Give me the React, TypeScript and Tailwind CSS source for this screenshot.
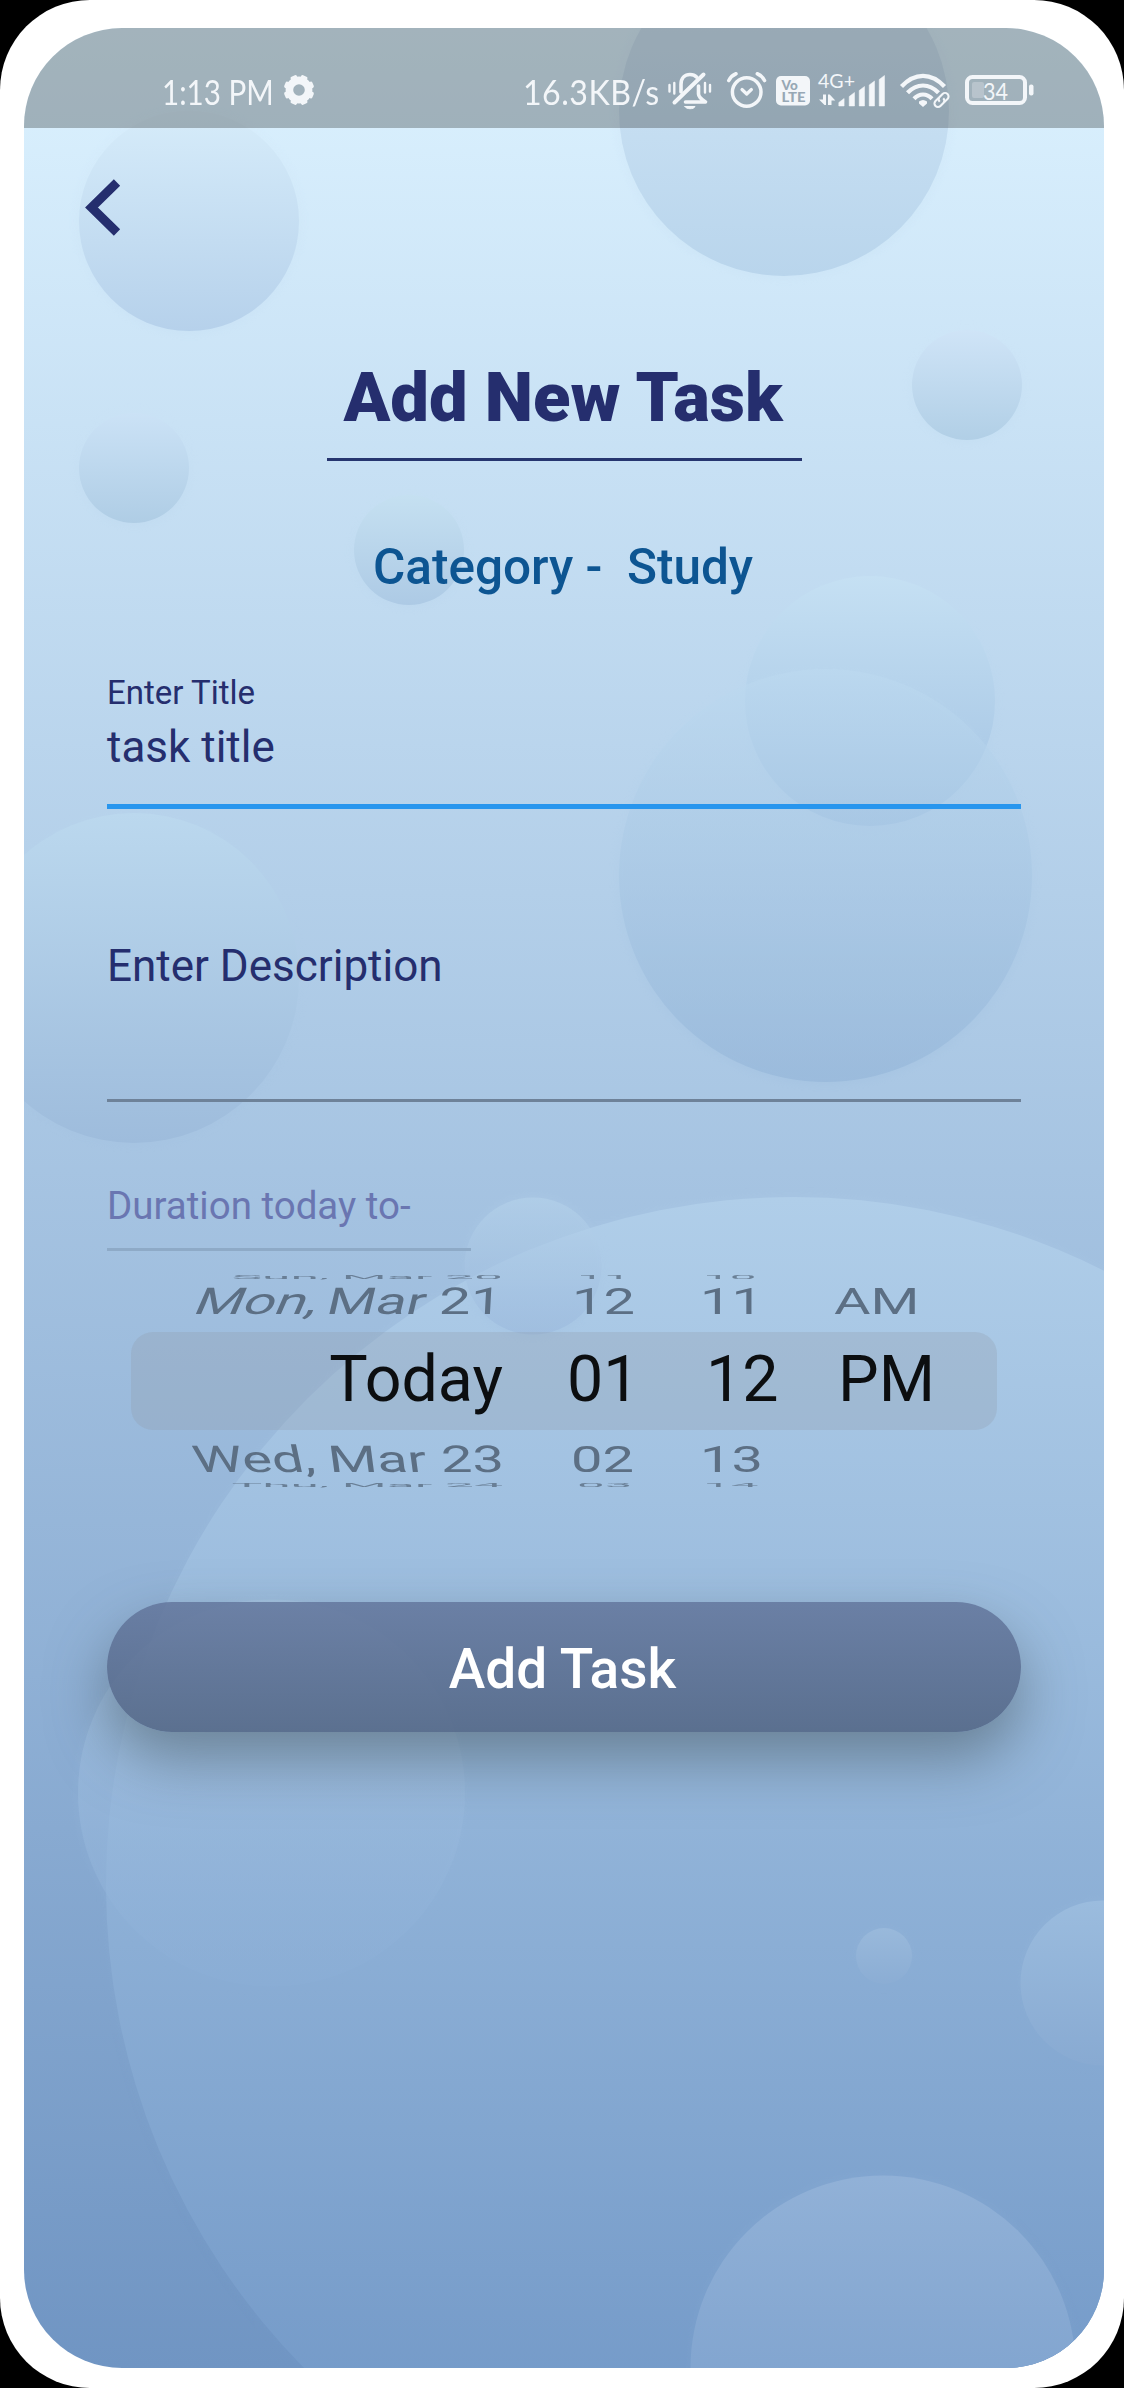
import React from "react";

type Bubble = { cx: number; cy: number; r: number; top: string; bottom: string; o?: number };

const bubbles: Bubble[] = [
  { cx: 189, cy: 221, r: 110, top: "#d6ecfa", bottom: "#b6d1eb" },
  { cx: 784, cy: 111, r: 165, top: "#d3e8f8", bottom: "#b9d5ec" },
  { cx: 967, cy: 385, r: 55, top: "#cfe4f7", bottom: "#b1cfe6" },
  { cx: 134, cy: 468, r: 55, top: "#cbe2f6", bottom: "#afcde5" },
  { cx: 409, cy: 550, r: 55, top: "#c5e0f1", bottom: "#adcae5" },
  { cx: 870, cy: 701, r: 125, top: "#c5e0f3", bottom: "#a2c2e2" },
  { cx: 825.5, cy: 875.5, r: 206.5, top: "#bddaf0", bottom: "#91b3d7", o: 0.55 },
  { cx: 134, cy: 978, r: 165, top: "#bbd8ee", bottom: "#9ebcdc" },
  { cx: 794, cy: 1885, r: 688, top: "#b0cee9", bottom: "#6c93c4" },
  { cx: 533, cy: 1266, r: 68.5, top: "#b8d5ec", bottom: "#98b6db", o: 0.5 },
  { cx: 271.5, cy: 1793, r: 193.5, top: "#aac8e6", bottom: "#8baed6", o: 0.5 },
  { cx: 884, cy: 1956, r: 28, top: "#99b9db", bottom: "#8badd4" },
  { cx: 1103, cy: 1983, r: 82.5, top: "#9bbcde", bottom: "#88aad2" },
  { cx: 883, cy: 2368, r: 192.5, top: "#91b1d7", bottom: "#749ac9" },
];

function Bubbles() {
  return (
    <svg className="absolute inset-0" width="1080" height="2340" viewBox="24 28 1080 2340" aria-hidden="true">
      <defs>
        <filter id="halo" x="-20%" y="-20%" width="140%" height="140%">
          <feGaussianBlur stdDeviation="3" />
        </filter>
        {bubbles.map((b, i) => (
          <linearGradient key={i} id={`bubble-${i}`} x1="0" y1="0" x2="0" y2="1">
            <stop offset="0" stopColor={b.top} />
            <stop offset="1" stopColor={b.bottom} />
          </linearGradient>
        ))}
      </defs>
      {bubbles.map((b, i) => (
        <g key={i} fill={`url(#bubble-${i})`}>
          <circle cx={b.cx} cy={b.cy} r={b.r + 4} opacity={0.12} filter="url(#halo)" />
          <circle cx={b.cx} cy={b.cy} r={b.r} opacity={b.o ?? 1} />
        </g>
      ))}
    </svg>
  );
}

const ink = "#f3f6f9";

function StatusBar() {
  return (
    <div className="relative flex h-[100px] items-start bg-[#363c3c]/34 pl-[138px] font-['Lato'] text-[#f3f6f9]">
      <span className="mt-[42px] w-[120px] origin-left scale-x-[0.87] whitespace-nowrap text-[34px] leading-[44px]">1:13 PM</span>
      <svg className="ml-[1px] mt-[46px]" width="32" height="32" viewBox="-16 -16 32 32">
        <circle r="9.6" fill="none" stroke={ink} strokeWidth="7.6" />
        {[22.5, 67.5, 112.5, 157.5, 202.5, 247.5, 292.5, 337.5].map((a) => (
          <rect key={a} x="-3.4" y="-15.2" width="6.8" height="6" rx="1.6" fill={ink} transform={`rotate(${a})`} />
        ))}
      </svg>
      <span className="ml-[208px] mt-[42px] w-[144px] origin-left scale-x-[0.945] whitespace-nowrap text-[34px] leading-[44px] tracking-[0.5px]">16.3KB/s</span>
      <svg className="mt-[42px] shrink-0" width="48" height="42" viewBox="667 70 48 42" fill="none" stroke={ink} strokeWidth="3.6" strokeLinecap="round" strokeLinejoin="round">
        <path d="M703.5 74.5 674.5 102.5" strokeWidth="4" />
        <path d="M681 92V84.500C681 78 685 74.500 690 74.500C693 74.500 695 75.300 696.500 77" />
        <path d="M698.500 86V94C698.500 97 701 99 705.500 102H685.500" />
        <path d="M685 106.500H695C694 109.500 686 109.500 685 106.500Z" fill={ink} strokeWidth="1" />
        <path d="M669.500 85V91.500M674.300 83V93.500M705 83V92.500M710 85V91.500" strokeWidth="2.400" />
      </svg>
      <svg className="ml-[10px] mt-[42px] shrink-0" width="44" height="42" viewBox="725 70 44 42" fill="none" stroke={ink} strokeWidth="3.6" strokeLinecap="round" strokeLinejoin="round">
        <circle cx="746.700" cy="92" r="14.300" strokeWidth="3.500" />
        <path d="M742 89.500 746.700 94 751.400 89.500" strokeWidth="3.200" />
        <path d="M728.800 80.500Q731.500 75.500 736 73.800M764.500 80.500Q761.800 75.500 757.300 73.800" />
      </svg>
      <svg className="ml-[6px] mt-[42px] shrink-0" width="36" height="42" viewBox="775 70 36 42">
        <rect x="776" y="76" width="34" height="29.500" rx="5" fill={ink} />
        <g fill="#97a8b5" fontFamily="Lato" fontWeight="900">
          <text x="781.500" y="89.500" fontSize="13.500">Vo</text>
          <text x="781.500" y="102" fontSize="13.500" textLength="24" lengthAdjust="spacingAndGlyphs">LTE</text>
        </g>
      </svg>
      <svg className="ml-[6px] mt-[42px] shrink-0" width="72" height="42" viewBox="817 70 72 42" fill={ink}>
        <text x="818" y="88" fontSize="19.500" fontFamily="Lato" textLength="37" lengthAdjust="spacingAndGlyphs">4G+</text>
        <path d="M823 94.500H826V105H824.500L819 99.500H823Z" />
        <path d="M828 94.500H829.700L835.300 100.500H831.500V105H828Z" />
        {[
          [838.8, 98.5],
          [849.2, 92.5],
          [859.2, 86.5],
          [869.2, 81],
          [879.2, 75.5],
        ].map(([x, y]) => (
          <path key={x} d={`M${x} ${y + 4}L${x + 5.3} ${y}V106H${x}Z`} stroke={ink} strokeWidth="0.500" strokeLinejoin="round" />
        ))}
      </svg>
      <svg className="ml-[9px] mt-[42px] shrink-0" width="56" height="42" viewBox="898 70 56 42" fill="none" stroke={ink} strokeWidth="4.200">
        <path d="M901.500 86.500Q911.500 75.800 923 75.800T944.500 86.500" />
        <path d="M907.500 92.800Q914.500 85.500 923 85.500T938.500 92.800" />
        <path d="M914 98.800Q918 94.500 923 94.500T932 98.800" />
        <path d="M919 101.500Q923 98.500 927 101.500V103.500L923 107L919 103.500Z" fill={ink} stroke="none" />
        <g strokeWidth="2.100" transform="rotate(-45 941.500 100)">
          <path d="M941 96.500H936.500A3.500 3.500 0 0 0 936.500 103.500H941A3.500 3.500 0 0 0 944 100" />
          <path d="M942 103.500H946.500A3.500 3.500 0 0 0 946.500 96.500H942A3.500 3.500 0 0 0 939 100" />
        </g>
      </svg>
      <svg className="ml-[10px] mt-[42px] shrink-0" width="72" height="42" viewBox="964 70 72 42">
        <rect x="967" y="77" width="58" height="26" rx="5.500" fill="none" stroke={ink} strokeWidth="4" />
        <rect x="972" y="82" width="12" height="16" rx="2" fill={ink} opacity="0.280" />
        <rect x="1029" y="84.500" width="4.500" height="11" rx="2" fill={ink} />
        <text x="983" y="99.500" fontSize="24" fontFamily="Lato" fill={ink} textLength="25" lengthAdjust="spacingAndGlyphs">34</text>
      </svg>
    </div>
  );
}

function Picker() {
  return (
    <div className="mx-[107px] mt-[24px] flex flex-col text-[56px] text-[#5c6f84]">
      <div className="grid h-[4px] grid-cols-[372px_74px_126px_130px_1fr] whitespace-nowrap leading-[4px] opacity-80">
        <span className="origin-right scale-x-[0.92] scale-y-[0.1] text-right">Sun, Mar 20</span>
        <span />
        <span className="origin-left scale-x-[0.85] scale-y-[0.1]">11</span>
        <span className="origin-left scale-x-[0.85] scale-y-[0.1]">10</span>
      </div>
      <div className="grid h-[53px] grid-cols-[371px_70px_128px_131px_1fr] whitespace-nowrap leading-[42px]">
        <span className="flex scale-y-[0.66] justify-end">
          <span className="mr-[9px] -skew-x-[16deg]">Mon,</span>
          <span className="mr-[14px] -skew-x-[9deg]">Mar</span>
          <span className="-skew-x-[2deg]">21</span>
        </span>
        <span />
        <span className="scale-y-[0.66]">12</span>
        <span className="scale-y-[0.66]">11</span>
        <span className="scale-y-[0.66] pl-[3px]">AM</span>
      </div>
      <div className="grid h-[98px] grid-cols-[372px_64px_139px_132px_1fr] rounded-[22px] bg-[#8e9aa8]/28 text-[64.500px] leading-[94px] text-[#0c0e10]">
        <span className="text-right">Today</span>
        <span />
        <span>01</span>
        <span>12</span>
        <span>PM</span>
      </div>
      <div className="grid h-[53px] grid-cols-[373px_67px_129px_129px_1fr] whitespace-nowrap leading-[58px]">
        <span className="flex scale-y-[0.66] justify-end">
          <span className="mr-[14px] skew-x-[8deg]">Wed,</span>
          <span className="mr-[15px] skew-x-[5deg]">Mar</span>
          <span className="skew-x-[1deg]">23</span>
        </span>
        <span />
        <span className="scale-y-[0.66]">02</span>
        <span className="scale-y-[0.66]">13</span>
      </div>
      <div className="grid h-[5px] grid-cols-[372px_74px_126px_130px_1fr] whitespace-nowrap leading-[5px] opacity-80">
        <span className="origin-right scale-x-[0.92] scale-y-[0.1] text-right">Thu, Mar 24</span>
        <span />
        <span className="origin-left scale-x-[0.88] scale-y-[0.1]">03</span>
        <span className="origin-left scale-x-[0.88] scale-y-[0.1]">14</span>
      </div>
    </div>
  );
}

export default function App() {
  return (
    <div className="h-[2388px] w-[1124px] bg-black font-['Roboto',sans-serif]">
      <div className="h-full w-full rounded-[90px] bg-white px-[24px] pb-[20px] pt-[28px]">
        <main className="relative isolate h-[2340px] w-[1080px] overflow-hidden rounded-[98px] bg-linear-to-b from-[#dcf2ff] to-[#7095c3]">
          <Bubbles />
          <div className="relative flex flex-col">
            <StatusBar />
            <button className="ml-[60px] mt-[50px] h-[59px] w-[38px]" aria-label="Back">
              <svg width="38" height="59" viewBox="0 0 38 59" fill="none" stroke="#252e6e" strokeWidth="9">
                <path d="M33 4.500 7.500 29.500 33 54.500" />
              </svg>
            </button>
            <h1 className="mt-[120.500px] whitespace-nowrap pr-[2px] text-center text-[68.750px] font-black leading-[80px] text-[#252e6e]">Add New Task</h1>
            <div className="mx-auto mt-[20.500px] h-[3px] w-[475px] bg-[#26356f]" />
            <h2 className="mt-[76px] whitespace-pre pr-[2px] text-center text-[49.500px] font-medium leading-[60px] text-[#0d5592]">{"Category -  Study"}</h2>
            <div className="ml-[83px] mt-[76px] flex w-[914px] flex-col text-[#252e6e]">
              <label className="text-[33px] leading-[40px]">Enter Title</label>
              <span className="mt-[9px] text-[44px] leading-[50px]">task title</span>
              <div className="mt-[32px] h-[5px] bg-[#2896ee]" />
              <label className="mt-[132px] text-[44px] leading-[50px]">Enter Description</label>
              <div className="mt-[108px] h-[3px] bg-[#6e8299]" />
              <label className="mt-[79px] text-[38.500px] leading-[50px] text-[#6a76b1]">Duration today to-</label>
              <div className="mt-[17px] h-[3px] w-[364px] bg-[#8eaac7]" />
            </div>
            <Picker />
            <button className="ml-[83px] mt-[114px] h-[130px] w-[914px] rounded-[65px] bg-linear-to-b from-[#62759b]/85 to-[#506382]/85 pr-[3px] pt-[4px] text-[55px] font-medium text-white shadow-[0_27px_58px_rgba(70,85,95,0.55)]">
              Add Task
            </button>
          </div>
        </main>
      </div>
    </div>
  );
}
